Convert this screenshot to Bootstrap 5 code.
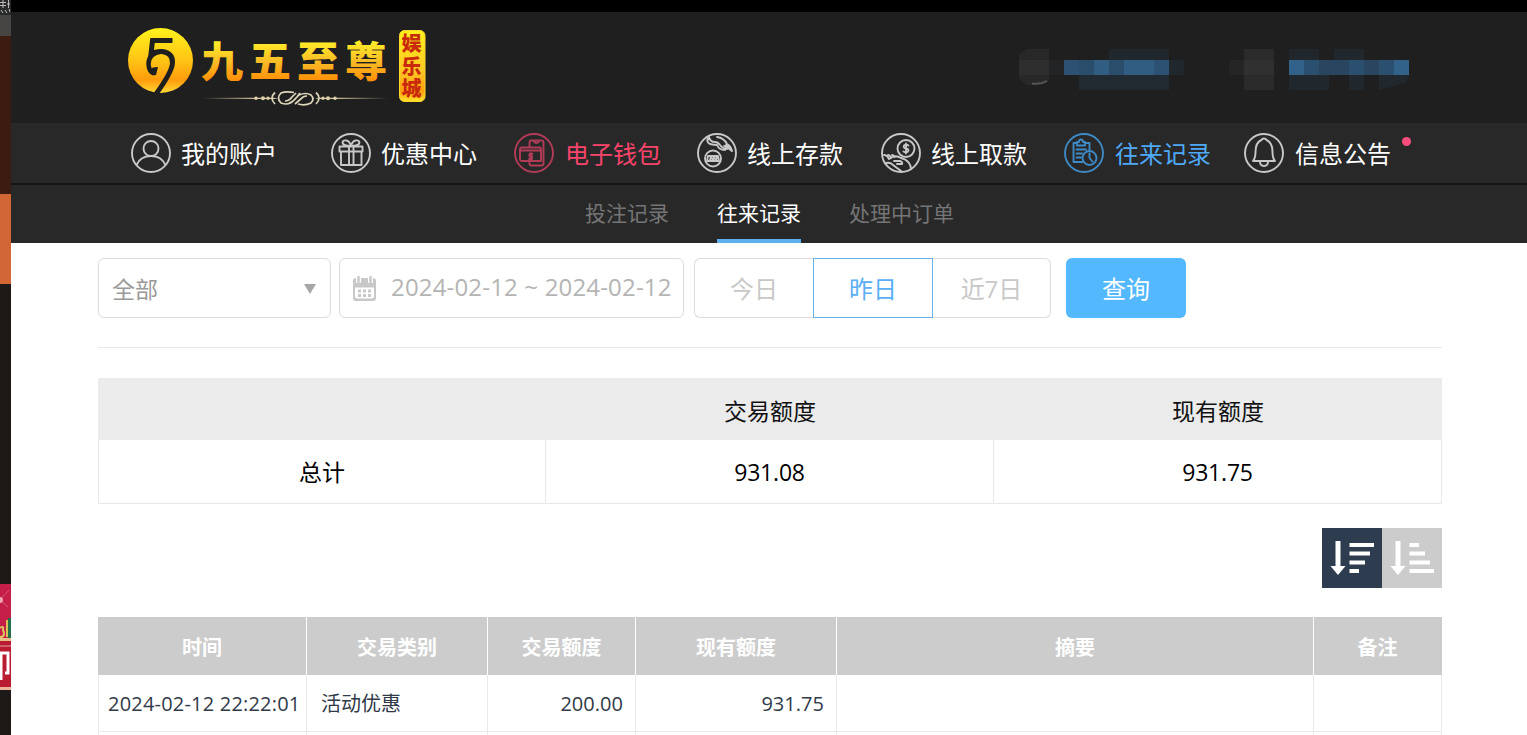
<!DOCTYPE html>
<html lang="zh-CN">
<head>
<meta charset="utf-8">
<meta name="viewport" content="width=device-width, initial-scale=1">
<title>往来记录</title>
<link href="https://cdn.jsdelivr.net/npm/bootstrap@5.3.0/dist/css/bootstrap.min.css" rel="stylesheet">
<style>
body{font-family:"Open Sans","Noto Sans CJK SC",sans-serif;color:#000;background:#fff}
.shell{height:735px}
.edge{width:11px;height:735px;background:#1d1917}
.topline{height:12px;background:#000}
.brandbar{height:111px;background:#1f1f1f;padding:12px 110px 0 109px}
.mainnav{height:60px;background:#282828;padding-left:120px;display:grid;grid-template-columns:200px 183px 183px 184px 183px 180px 180px;align-items:center}
.mainnav a{color:#fff;font-size:24px;line-height:41px;height:40px;gap:10px;white-space:nowrap}
.mainnav svg{width:40px;height:40px;fill:none;stroke:#c8c8c8;stroke-width:1.9;stroke-linecap:round;stroke-linejoin:round}
.mainnav a.hot{color:#f9456c;gap:11px}.mainnav .hot svg{stroke:#b23c58}
.mainnav a.current{color:#4fa9f7;gap:11px}.mainnav .current svg{stroke:#3d8ac4}
.mainnav a.msg{gap:11px}
.dot{width:9px;height:9px;background:#fb4e7c;top:4px;right:-20px}
.subnav{height:60px;background:#282828;border-top:2px solid #151515;gap:48px;padding-left:574px}
.subnav a{font-size:21px;line-height:56px;color:#757575;height:58px}
.subnav a.on{color:#fff;border-bottom:4px solid #5fb0ee}
.page{padding:15px 0 0 87px;width:1431px}
.filters{height:90px;border-bottom:1px solid #e8e8e8}
.box{height:60px;border:1px solid #dcdcdc;border-radius:6px;background:#fff;white-space:nowrap}
.pick{width:233px;padding:2px 14px 0 13px;font-size:23px;color:#999;margin-right:8px}
.caret{border:6.5px solid transparent;border-top:10px solid #a6a6a6;border-bottom:0}
.dates{width:345px;padding-left:12px;color:#b4b4b4;font-size:24px;margin-right:10px}
.dates span{letter-spacing:.17px;margin:-2px 0 0 14px}
.quick{width:357px;margin-right:15px}
.quick .btn{font-size:24px;color:#c8c8c8;border:1px solid #dcdcdc;border-radius:0;padding:1px 0 0;height:60px;width:120px}
.quick .btn:first-child{border-radius:6px 0 0 6px;width:119px;border-right:0}
.quick .btn:last-child{border-radius:0 6px 6px 0;width:118px;border-left:0}
.quick .btn.chosen{color:#59aef5;border-color:#67b2e7}
.query{width:120px;height:60px;background:#54b8ff;color:#fff;border-radius:6px;font-size:24px;padding:1px 0 0}
.summary{margin:30px 0 24px;table-layout:fixed;width:1344px;font-size:23px;text-align:center;border-collapse:separate;border-spacing:0}
.summary th{background:#ebebeb;height:62px;font-weight:400;padding:3px 0 0;color:#111;line-height:30px;width:448px}
.summary td{height:64px;border:solid #e8e8e8;border-width:0 1px 1px 0;padding:0;line-height:30px}
.summary td:first-child{border-left-width:1px}
.num{letter-spacing:-.2px}
.sorter span{width:60px;height:60px;background:#ccc}
.sorter .down{background:#2e3c50}
.records{table-layout:fixed;width:1344px;margin-top:29px;font-size:20px;border-collapse:separate;border-spacing:0;color:#303a49}
.records th{height:58px;background:#ccc;color:#fff;text-align:center;padding:3px 0 0;border-right:1px solid #fff;font-weight:700;line-height:30px}
.records th:last-child{border-right-color:#ccc}
.records td{height:57px;border:solid #eaeaea;border-width:0 1px 1px 0;padding:1px 12px 0;white-space:nowrap;line-height:30px}
.records td:first-child{border-left-width:1px}
.records td.time{padding-left:9px;padding-right:0;letter-spacing:.2px}
.records td.kind{padding-left:14px}
.records .num{letter-spacing:.03px}
.records .next td{height:3px;padding:0;border-bottom:0}
</style>
</head>
<body>
<div class="shell d-flex overflow-hidden">
<svg class="edge flex-shrink-0" viewBox="0 0 11 735">
  <path fill="#282a29" d="M0 0h11v15H0z"/><path fill="#464543" d="M0 15h11v21H0z"/>
  <path stroke="#bbb" fill="none" d="M0 2.500h6M0 5.500h6M3 0v8M7 4h3M8.500 0v8M1 10l2 3M5 10l2 3M9 9l1 3"/>
  <path fill="#3c1c10" d="M0 36h11v158H0z"/><path fill="#d26634" d="M0 194h11v90H0z"/>
  <path fill="#c51f48" d="M0 584h11v57H0z"/><path stroke="#e5708a" stroke-width=".7" d="M0 600l9-10M0 600l8 7"/><circle cx="0" cy="600" r="3" fill="#f0a5b4"/>
  <path stroke="#dcc45c" stroke-width="2" fill="none" d="M0 628q4-3 3 2q3 7-3 7"/><path stroke="#d9c15a" stroke-width="2" d="M7 620v17"/><path fill="#23714b" d="M8 618h3v22H8z"/>
  <path fill="#e5c28c" d="M0 638h11v3H0z"/><path fill="#ba1c32" d="M0 641h11v49H0z"/><path stroke="#e7a0a8" d="M0 646h11"/>
  <path stroke="#fff" stroke-width="3" fill="none" d="M1 652v28M0 653h8v20H5"/><path fill="#ebb49a" d="M0 687h11v3H0z"/>
</svg>
<div class="flex-grow-1">
<div class="topline"></div>
<header class="brandbar d-flex justify-content-between">
  <svg width="320" height="90" viewBox="120 24 320 90" font-family="Noto Sans CJK SC, sans-serif">
    <defs>
      <linearGradient id="gold" x1="0" y1="0" x2="0" y2="1"><stop offset="0" stop-color="#fff21c"/><stop offset=".5" stop-color="#ffc414"/><stop offset=".8" stop-color="#ff9b0c"/><stop offset="1" stop-color="#ffd936"/></linearGradient>
      <linearGradient id="goldText" gradientUnits="userSpaceOnUse" x1="0" y1="40" x2="0" y2="80"><stop offset="0" stop-color="#fff128"/><stop offset=".55" stop-color="#f9bb26"/><stop offset="1" stop-color="#ff9108"/></linearGradient>
      <linearGradient id="tag" x1="0" y1="0" x2="0" y2="1"><stop offset="0" stop-color="#fff01e"/><stop offset=".6" stop-color="#ffc423"/><stop offset=".85" stop-color="#ff9f10"/><stop offset="1" stop-color="#ffe52b"/></linearGradient>
      <linearGradient id="fade" gradientUnits="userSpaceOnUse" x1="202" y1="0" x2="388" y2="0"><stop offset="0" stop-color="#c9b98a" stop-opacity="0"/><stop offset=".3" stop-color="#d9cba4"/><stop offset=".7" stop-color="#d9cba4"/><stop offset="1" stop-color="#c9b98a" stop-opacity="0"/></linearGradient>
    </defs>
    <circle cx="160.500" cy="60.500" r="32.500" fill="url(#gold)"/>
    <path d="M172.500 40.500H152.500L151 54q5-3 11-2.500 11 1.500 10.500 11.500-.5 9-16.500 31" fill="none" stroke="#1f1f1f" stroke-width="5"/>
    <path d="M162 51.500Q148.500 53 148.500 64q.5 8 5.500 9.500" fill="none" stroke="#1f1f1f" stroke-width="4.500"/>
    <path d="M150 70q1-3 8-3l-2 8q-5 1-6-5z" fill="#1f1f1f"/>
    <g fill="url(#goldText)" font-size="42" font-weight="900"><text x="201" y="77">九</text><text x="249" y="77">五</text><text x="297" y="77">至</text><text x="345" y="77">尊</text></g>
    <path d="M202 97.700h72l4 .6-4 .6h-72zM388 97.700h-69l-4 .6 4 .6h69z" fill="url(#fade)"/>
    <g fill="#ded0a6"><circle cx="256" cy="98.300" r="1.800"/><circle cx="263" cy="98.300" r="2"/><circle cx="268" cy="98.300" r="1.700"/><circle cx="323" cy="98.300" r="1.700"/><circle cx="328" cy="98.300" r="2"/><circle cx="335" cy="98.300" r="1.800"/></g>
    <path d="M275 92.500q-6 5.500 0 11.500M316 92.500q6 5.500 0 11.500M294 92.500q-8-1.500-13 .5-5 5 0 10 8 3 13-3l5-5q7-3 12 0 4 4 0 8-6 3-13 1M285 101q4 0 7-4l4-4M289 103q4-1 8-6l3-4M295 104l8-7q2-1 4-1" fill="none" stroke="#ded6ba" stroke-width="1.700"/>
    <rect x="399.500" y="30.500" width="25.500" height="71" rx="5" fill="url(#tag)" stroke="#ffd52a"/>
    <g fill="#c92a0c" font-size="20" font-weight="900" text-anchor="middle"><text x="411.500" y="51">娱</text><text x="411.500" y="73.500">乐</text><text x="411.500" y="96">城</text></g>
  </svg>
  <svg width="400" height="80" viewBox="1018 24 400 80" shape-rendering="crispEdges">
    <path fill="#282828" d="M1020 54l8-5h22v31l-12 5h-10l-8-6z"/><path fill="#2e2e2e" d="M1020 60h30v15h-30z"/><path fill="#232425" d="M1050 60h15v15h-15z"/>
    <path d="M1033 83.500q9 1 15-2.500" stroke="#555" stroke-width="2" fill="none" shape-rendering="auto"/>
    <path fill="#20282e" d="M1110 49h60v11h-60zM1170 60h15v15h-15z"/><path fill="#212a31" d="M1080 75h90v15h-90z"/>
    <path fill="#2c5172" d="M1065 60h105v15h-105z"/><path fill="#315d82" d="M1095 60h15v15h-15zM1125 60h30v15h-30z"/><path fill="#2a4d6b" d="M1080 60h15v15h-15zM1110 60h15v15h-15z"/>
    <path fill="#252525" d="M1230 60h15v15h-15z"/><path fill="#2b2b2b" d="M1245 49h30v41h-30z"/><path fill="#303030" d="M1245 60h30v15h-30z"/>
    <path fill="#20272d" d="M1290 49h30v11h-30zM1335 49h30v11h-30zM1290 75h40v15h-40zM1350 75h15v15h-15zM1380 75h30l-4 8-26 7z"/>
    <path fill="#2a4560" d="M1290 60h120v15h-120z"/><path fill="#32628a" d="M1290 60h15v15h-15zM1395 60h15v15h-15z"/><path fill="#2b506f" d="M1305 60h15v15h-15zM1350 60h15v15h-15zM1380 60h15v15h-15z"/>
  </svg>
</header>
<nav class="mainnav">
  <a class="d-flex text-decoration-none"><svg viewBox="0 0 40 40"><circle cx="20" cy="20" r="19"/><circle cx="20" cy="15.500" r="7.500"/><path d="M5.500 32q4-9 14.500-9t14.500 9"/></svg>我的账户</a>
  <a class="d-flex text-decoration-none"><svg viewBox="0 0 40 40"><circle cx="20" cy="20" r="19"/><path d="M8.500 13.500h23v5h-23zM10 18.500h20.500V32H10zM18 13.500V32M22.500 13.500V32M20 13q-8 0-8.500-3.500.5-2.500 4-2 3.500 1 4.500 5.500 1-4.500 4.500-5.500 3.500-.5 4 2Q28 13 20 13"/></svg>优惠中心</a>
  <a class="hot d-flex text-decoration-none"><svg viewBox="0 0 40 40"><circle cx="20" cy="20" r="19"/><path d="M15.500 14V9.500q0-2 2-2h10q2 0 2 2v21q0 2-2 2h-10q-2 0-2-2V28M20 8q.5 2 2.500 2T25 8M6 16.500q0-2 2-2h17.500q1.500 0 1.500 2V28H8q-2 0-2-2zM6 17.500h21M18.500 21h-3v2.500h2.500V26h-3M17 20v7"/></svg>电子钱包</a>
  <a class="d-flex text-decoration-none"><svg viewBox="0 0 40 40"><circle cx="20" cy="20" r="19"/><circle cx="16" cy="25.500" r="8"/><path d="M10 28l1-5h10l1 5zM13 27l1-3 2 3 1-3 2 3 1-3M12 4q1 5 6 5 3 0 5 3 3 4 7 4-1-2-3-3 4 1 8 5-1-5-5-7-3-6-10-7M11 5q-2 4 2 6 4 1 7 1 2 5 8 5M29 12l5 5"/></svg>线上存款</a>
  <a class="d-flex text-decoration-none"><svg viewBox="0 0 40 40"><circle cx="20" cy="20" r="19"/><circle cx="25" cy="15.500" r="8.500"/><path d="M27.500 12.500q-2.500-1.500-4.500 0-1 2.500 2 3 3.500.5 2 3-2 1.500-4.500 0M25 10.500v10M5 30q5-1 7 2 4 3 8 6M3 22q3 0 5 4 6-5 12-1 5 1 8 5 2 3 2 6M7 22q2 0 3 3M11 22q2 0 3 2M13 28h6q3 1 2 3h-5"/></svg>线上取款</a>
  <a class="current d-flex text-decoration-none"><svg viewBox="0 0 40 40"><circle cx="20" cy="20" r="19"/><path d="M19 29H9.500V10H13M21 10h4.500v7M13 9h2q0-2.500 2-2.500T19 9h2v3.500h-8zM12.500 16.500H22M12.500 20.500H18M12.500 24.500H17"/><circle cx="25.500" cy="25" r="7"/><path d="M25.500 20.500V25l3 3.500"/></svg>往来记录</a>
  <a class="msg d-flex text-decoration-none"><svg viewBox="0 0 40 40"><circle cx="20" cy="20" r="19"/><path d="M9 28q2.500-3 2.500-9 0-9.500 6-12 .5-1.500 2.500-1.500T22.500 7q6 2.500 6 12 0 6 2.500 9zM16 28.500q0 4.500 4 4.500t4-4.500"/></svg><span class="position-relative">信息公告<i class="dot rounded-circle position-absolute"></i></span></a>
</nav>
<nav class="subnav d-flex"><a class="text-decoration-none">投注记录</a><a class="on text-decoration-none">往来记录</a><a class="text-decoration-none">处理中订单</a></nav>
<main class="page">
  <div class="filters d-flex">
    <div class="box pick d-flex align-items-center justify-content-between">全部<i class="caret"></i></div>
    <div class="box dates d-flex align-items-center"><svg width="25" height="27" viewBox="0 0 25 27"><path fill="#c8c8c8" d="M4 3h17q3 0 3 3v17q0 3-3 3H4q-3 0-3-3V6q0-3 3-3z"/><path fill="#fff" d="M3 12.500h19v9q0 2-2 2H5q-2 0-2-2z"/><path stroke="#fff" stroke-width="5" d="M6.500 0v8M18.500 0v8"/><path stroke="#c8c8c8" stroke-width="2.500" stroke-linecap="round" d="M6.500 2v5M18.500 2v5"/><path stroke="#c8c8c8" stroke-width="3" stroke-dasharray="3 2" d="M6 16h13M6 20.500h13"/></svg><span>2024-02-12 ~ 2024-02-12</span></div>
    <div class="quick d-flex"><button class="btn">今日</button><button class="btn chosen">昨日</button><button class="btn">近7日</button></div>
    <button class="btn query">查询</button>
  </div>
  <table class="summary">
    <tr><th></th><th>交易额度</th><th>现有额度</th></tr>
    <tr><td>总计</td><td class="num">931.08</td><td class="num">931.75</td></tr>
  </table>
  <div class="sorter d-flex justify-content-end">
    <span class="down"><svg width="60" height="60" fill="none" stroke="#fff" stroke-width="4"><path stroke-width="5" d="M16 13v27"/><path fill="#fff" stroke="none" d="M8.500 38h15L16 47z"/><path d="M27.500 17H52M27.500 25.500H48M27.500 34.500H43M27.500 43H37"/></svg></span>
    <span><svg width="60" height="60" fill="none" stroke="#fff" stroke-width="4"><path stroke-width="5" d="M16 13v27"/><path fill="#fff" stroke="none" d="M8.500 38h15L16 47z"/><path d="M27.500 17H37M27.500 25.500H43M27.500 34.500H48M27.500 43H52"/></svg></span>
  </div>
  <table class="records">
    <colgroup><col style="width:209px"><col style="width:181px"><col style="width:148px"><col style="width:201px"><col style="width:477px"><col style="width:128px"></colgroup>
    <tr><th>时间</th><th>交易类别</th><th>交易额度</th><th>现有额度</th><th>摘要</th><th>备注</th></tr>
    <tr><td class="time">2024-02-12 22:22:01</td><td class="kind">活动优惠</td><td class="num text-end">200.00</td><td class="num text-end">931.75</td><td></td><td></td></tr>
    <tr class="next"><td></td><td></td><td></td><td></td><td></td><td></td></tr>
  </table>
</main>
</div>
</div>
<script src="https://cdn.jsdelivr.net/npm/bootstrap@5.3.0/dist/js/bootstrap.bundle.min.js"></script>
</body>
</html>
